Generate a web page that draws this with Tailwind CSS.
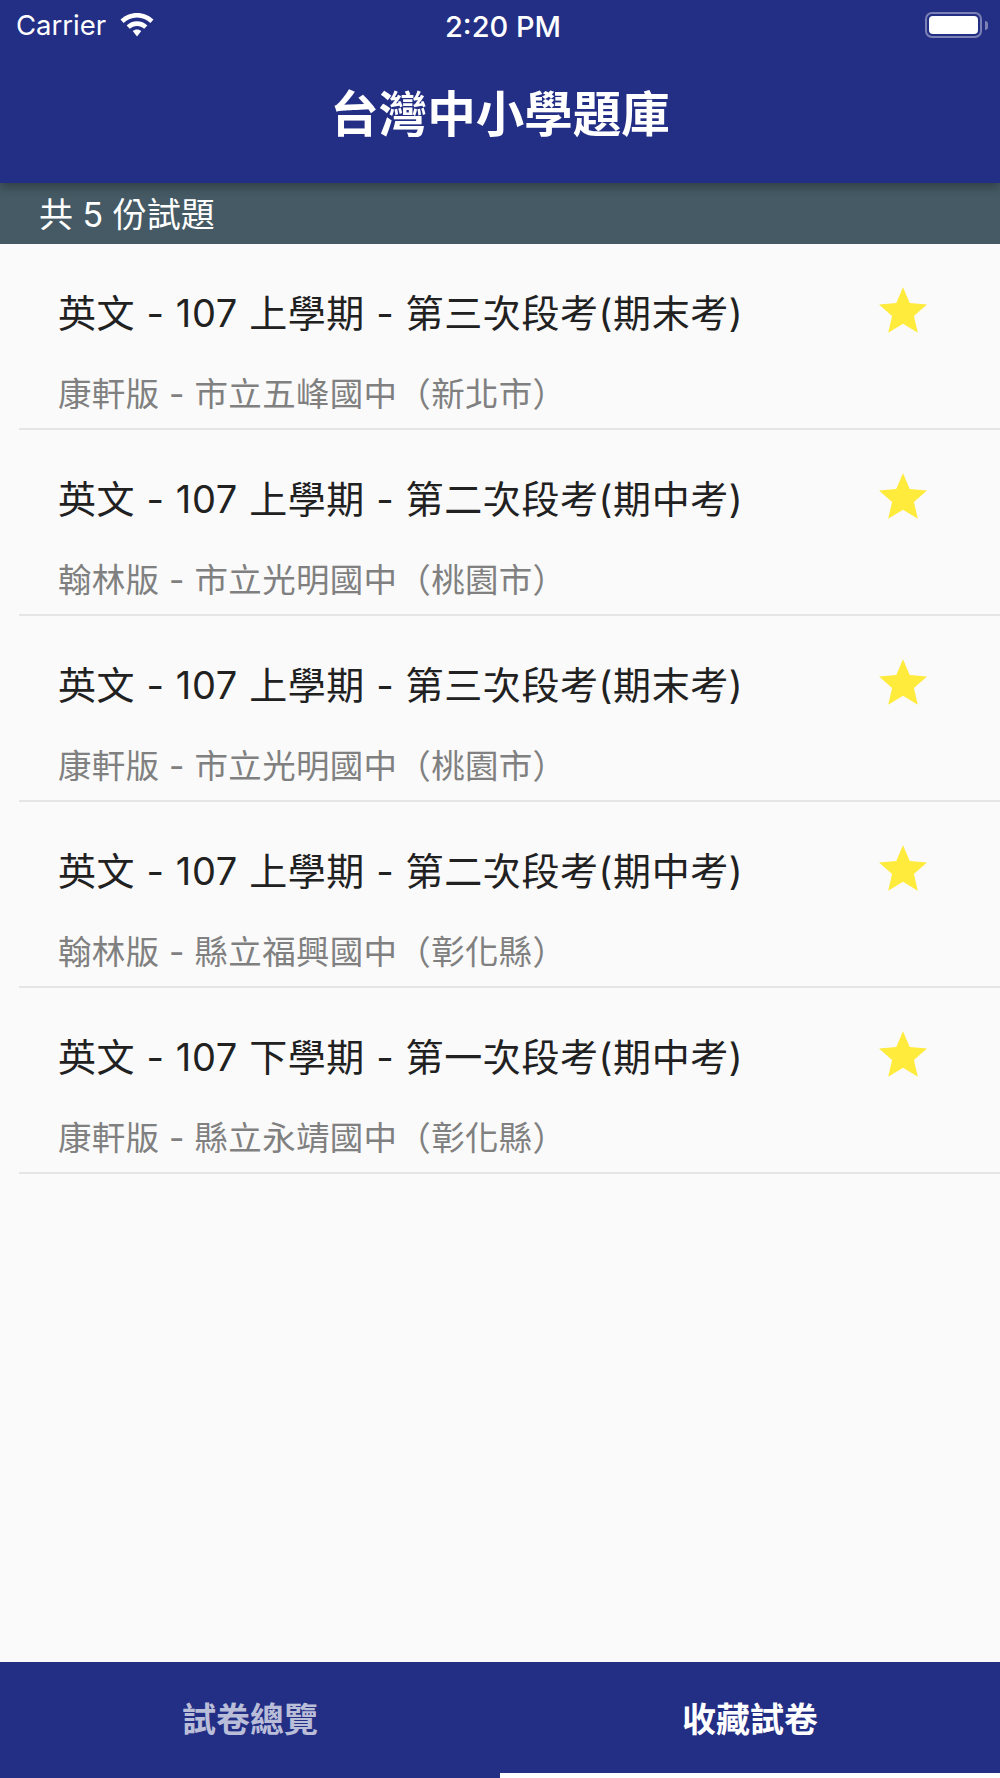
<!DOCTYPE html>
<html lang="zh-Hant">
<head>
    <meta charset="UTF-8">
    <meta name="viewport" content="width=device-width, initial-scale=1.0">
    <script src="https://cdn.jsdelivr.net/npm/@tailwindcss/browser@4"></script>
    <title>台灣中小學題庫</title>
</head>
<body class="bg-[#fafafa] font-['Inter','Noto_Sans_CJK_TC',sans-serif]">
    <div class="flex flex-col w-[1000px] h-[1778px] overflow-hidden">

        <!-- app bar -->
        <header class="relative z-10 h-[183px] shrink-0 bg-[#232e85] text-white shadow-[0_4px_10px_rgba(0,0,0,0.3)]">
            <div class="relative flex items-center h-[50px] pl-[16px] pr-[12px]">
                <span class="mt-[2px] text-[27.5px] leading-none">Carrier</span>
                <svg class="ml-[14px]" width="34" height="24" viewBox="0 0 34 24" fill="white">
                    <path d="M17 0C10.6 0 4.8 2.5 0.5 6.6L3.6 10C7.1 6.7 11.8 4.6 17 4.6S26.9 6.7 30.4 10L33.5 6.6C29.2 2.5 23.4 0 17 0Z"/>
                    <path d="M17 8.2C13 8.2 9.3 9.8 6.6 12.4L9.8 15.8C11.7 14 14.2 12.9 17 12.9S22.3 14 24.2 15.8L27.4 12.4C24.7 9.8 21 8.2 17 8.2Z"/>
                    <path d="M17 16.4C15.3 16.4 13.8 17 12.7 18.1L17 23.5L21.3 18.1C20.2 17 18.7 16.4 17 16.4Z"/>
                </svg>
                <span class="absolute left-[445px] top-[12px] text-[29px] leading-none font-medium">2:20 PM</span>
                <div class="ml-auto flex items-center">
                    <div class="w-[57px] h-[26px] rounded-[7px] border-2 border-white/40 p-[2px]">
                        <div class="w-full h-full rounded-[4px] bg-white"></div>
                    </div>
                    <div class="w-[3px] h-[9px] ml-[3px] rounded-r-full bg-white/40"></div>
                </div>
            </div>
            <h1 class="mt-[29px] text-center text-[48.5px] leading-[72px] font-bold">台灣中小學題庫</h1>
        </header>

        <div class="h-[61px] shrink-0 pl-[39px] pt-[1px] bg-[#455a64] text-white text-[34px] leading-[61px]">共 5 份試題</div>

        <!-- exam list -->
        <main class="flex-1">
            <div class="flex flex-col">
                <div class="flex items-start h-[186px] ml-[19px] border-b-2 border-[#e5e5e5]">
                    <div class="flex-1 pl-[39px]">
                        <div class="mt-[42px] text-[38px] tracking-[0.6px] leading-[54px] text-[#212121]">英文 - 107 上學期 - 第三次段考(期末考)</div>
                        <div class="mt-[29px] text-[33.5px] tracking-[0.3px] leading-[50px] text-[#808080]">康軒版 - 市立五峰國中（新北市）</div>
                    </div>
                    <svg class="mt-[43px] mr-[73px]" width="48" height="46" viewBox="2 2 20 19" fill="#ffeb3b"><path d="M12 17.27L18.18 21l-1.64-7.03L22 9.24l-7.19-.61L12 2 9.19 8.63 2 9.24l5.46 4.73L5.82 21z"/></svg>
                </div>
                <div class="flex items-start h-[186px] ml-[19px] border-b-2 border-[#e5e5e5]">
                    <div class="flex-1 pl-[39px]">
                        <div class="mt-[42px] text-[38px] tracking-[0.6px] leading-[54px] text-[#212121]">英文 - 107 上學期 - 第二次段考(期中考)</div>
                        <div class="mt-[29px] text-[33.5px] tracking-[0.3px] leading-[50px] text-[#808080]">翰林版 - 市立光明國中（桃園市）</div>
                    </div>
                    <svg class="mt-[43px] mr-[73px]" width="48" height="46" viewBox="2 2 20 19" fill="#ffeb3b"><path d="M12 17.27L18.18 21l-1.64-7.03L22 9.24l-7.19-.61L12 2 9.19 8.63 2 9.24l5.46 4.73L5.82 21z"/></svg>
                </div>
                <div class="flex items-start h-[186px] ml-[19px] border-b-2 border-[#e5e5e5]">
                    <div class="flex-1 pl-[39px]">
                        <div class="mt-[42px] text-[38px] tracking-[0.6px] leading-[54px] text-[#212121]">英文 - 107 上學期 - 第三次段考(期末考)</div>
                        <div class="mt-[29px] text-[33.5px] tracking-[0.3px] leading-[50px] text-[#808080]">康軒版 - 市立光明國中（桃園市）</div>
                    </div>
                    <svg class="mt-[43px] mr-[73px]" width="48" height="46" viewBox="2 2 20 19" fill="#ffeb3b"><path d="M12 17.27L18.18 21l-1.64-7.03L22 9.24l-7.19-.61L12 2 9.19 8.63 2 9.24l5.46 4.73L5.82 21z"/></svg>
                </div>
                <div class="flex items-start h-[186px] ml-[19px] border-b-2 border-[#e5e5e5]">
                    <div class="flex-1 pl-[39px]">
                        <div class="mt-[42px] text-[38px] tracking-[0.6px] leading-[54px] text-[#212121]">英文 - 107 上學期 - 第二次段考(期中考)</div>
                        <div class="mt-[29px] text-[33.5px] tracking-[0.3px] leading-[50px] text-[#808080]">翰林版 - 縣立福興國中（彰化縣）</div>
                    </div>
                    <svg class="mt-[43px] mr-[73px]" width="48" height="46" viewBox="2 2 20 19" fill="#ffeb3b"><path d="M12 17.27L18.18 21l-1.64-7.03L22 9.24l-7.19-.61L12 2 9.19 8.63 2 9.24l5.46 4.73L5.82 21z"/></svg>
                </div>
                <div class="flex items-start h-[186px] ml-[19px] border-b-2 border-[#e5e5e5]">
                    <div class="flex-1 pl-[39px]">
                        <div class="mt-[42px] text-[38px] tracking-[0.6px] leading-[54px] text-[#212121]">英文 - 107 下學期 - 第一次段考(期中考)</div>
                        <div class="mt-[29px] text-[33.5px] tracking-[0.3px] leading-[50px] text-[#808080]">康軒版 - 縣立永靖國中（彰化縣）</div>
                    </div>
                    <svg class="mt-[43px] mr-[73px]" width="48" height="46" viewBox="2 2 20 19" fill="#ffeb3b"><path d="M12 17.27L18.18 21l-1.64-7.03L22 9.24l-7.19-.61L12 2 9.19 8.63 2 9.24l5.46 4.73L5.82 21z"/></svg>
                </div>
            </div>
        </main>

        <!-- tabs -->
        <nav class="flex h-[116px] shrink-0 bg-[#232e85] text-[34px] font-bold">
            <div class="flex-1 pb-[2px] flex items-center justify-center text-white/70">試卷總覽</div>
            <div class="flex-1 pt-[3px] flex items-center justify-center text-white border-b-[5px] border-white">收藏試卷</div>
        </nav>
    </div>
</body>
</html>
